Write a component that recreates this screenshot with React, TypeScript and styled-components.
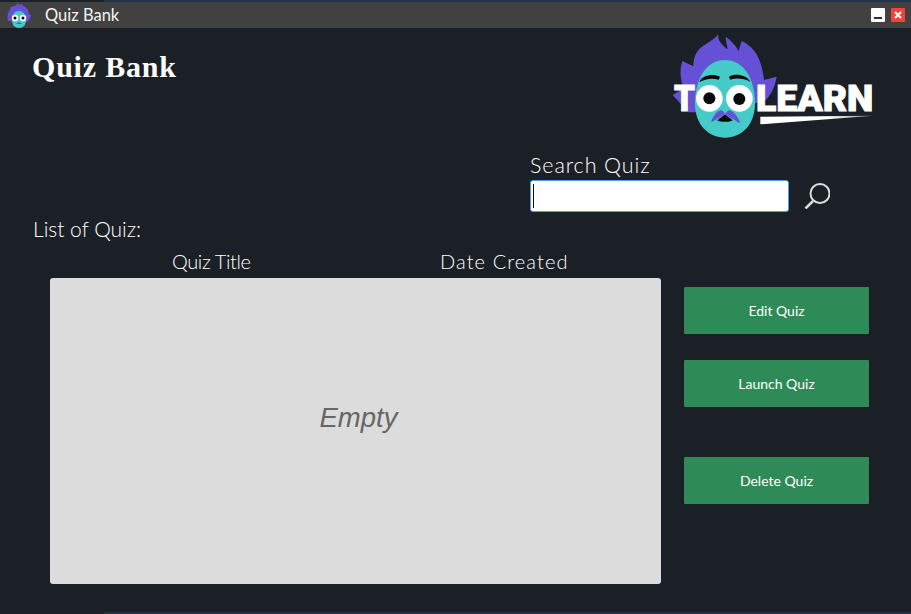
import React from "react";
import styled, { createGlobalStyle } from "styled-components";

const GlobalStyle = createGlobalStyle`
  html, body {
    margin: 0;
    padding: 0;
    background: #1b2027;
  }
`;

const Window = styled.div`
  width: 911px;
  height: 614px;
  display: flex;
  flex-direction: column;
  overflow: hidden;
  background: #1b2027;
  color: #fff;
  font-family: "Lato", "Open Sans", sans-serif;
  font-weight: 400;
`;

const EdgeStrip = styled.div<{ $left: string }>`
  height: 2px;
  flex: none;
  background: linear-gradient(to right, ${(p) => p.$left} 104px, #22354a 104px);
`;

const TitleBar = styled.div`
  height: 26px;
  flex: none;
  display: flex;
  align-items: center;
  padding: 0 6px 0 7px;
  background: #414141;
`;

const TitleText = styled.span`
  margin-left: 14px;
  font-size: 16.5px;
  color: #f4f4f4;
`;

const WindowControls = styled.div`
  margin-left: auto;
  display: flex;
  gap: 6px;
`;

const WindowButton = styled.div<{ $close?: boolean }>`
  width: 14px;
  height: 14px;
  border-radius: 1px;
  display: flex;
  align-items: center;
  justify-content: center;
  background: ${(p) => (p.$close ? "#f04438" : "#fff")};
`;

const Content = styled.div`
  flex: 1;
  display: flex;
  flex-direction: column;
  padding: 0 42px 0 33px;
`;

const TopRow = styled.div`
  height: 124px;
  display: flex;
  justify-content: space-between;
`;

const Heading = styled.h1`
  margin: 22px 0 0 -1px;
  font-family: "Liberation Serif", "Times New Roman", serif;
  font-size: 30px;
  font-weight: 700;
  letter-spacing: 0.8px;
  line-height: 34px;
`;

const LogoSlot = styled.div`
  margin: 4px -8px 0 0;
`;

const SearchBlock = styled.div`
  align-self: flex-end;
  width: 301px;
  margin-right: 38px;
`;

const FieldLabel = styled.div`
  margin-bottom: 2px;
  font-size: 21.500px;
  font-weight: 300;
  letter-spacing: 0.9px;
  line-height: 26px;
`;

const SearchRow = styled.div`
  display: flex;
  align-items: center;
  gap: 15px;
`;

const SearchInput = styled.div`
  width: 259px;
  height: 32px;
  box-sizing: border-box;
  display: flex;
  align-items: center;
  padding-left: 2px;
  background: #fff;
  border: 1px solid #4a9ff5;
  border-radius: 3px;
`;

const Caret = styled.div`
  width: 1px;
  height: 24px;
  background: #111;
`;

const ListLabel = styled.div`
  margin: 2px 0 1px;
  font-size: 21px;
  font-weight: 300;
  line-height: 30px;
`;

const ColumnHeads = styled.div`
  display: flex;
  height: 31px;
  margin-bottom: 2px;
  align-items: center;
  font-size: 20px;
  font-weight: 300;
`;

const ColumnHead = styled.span<{ $width: number; $spacing?: number }>`
  width: ${(p) => p.$width}px;
  flex: none;
  letter-spacing: ${(p) => p.$spacing ?? 0}px;
  white-space: nowrap;
`;

const Body = styled.div`
  display: flex;
  padding-left: 17px;
`;

const ListPanel = styled.div`
  width: 611px;
  height: 306px;
  box-sizing: border-box;
  padding: 0 0 26px 6px;
  display: flex;
  align-items: center;
  justify-content: center;
  background: #dcdcdc;
  border-radius: 3px;
`;

const EmptyText = styled.span`
  font-family: "Liberation Sans", Arial, sans-serif;
  font-style: italic;
  font-size: 27.500px;
  color: #666;
`;

const ActionColumn = styled.div`
  margin-left: 23px;
  padding-top: 9px;
  display: flex;
  flex-direction: column;
`;

const ActionButton = styled.button<{ $gap: number }>`
  width: 185px;
  height: 47px;
  margin-bottom: ${(p) => p.$gap}px;
  border: none;
  border-radius: 1px;
  background: #2e8b57;
  color: #fff;
  font-family: "Lato", "Open Sans", sans-serif;
  font-size: 14px;
  font-weight: 400;
`;

const LogoLetters = styled.text`
  font-family: "Roboto", "Inter", sans-serif;
  font-size: 112px;
  font-weight: 900;
  fill: #fff;
  stroke: #fff;
  stroke-width: 3px;
`;

function Logo() {
  return (
    <svg width="207" height="109" viewBox="30 21 621 327">
      <defs>
        <linearGradient id="swoosh" x1="0" x2="1" y1="0" y2="0">
          <stop offset="0.6" stopColor="#fff" />
          <stop offset="1" stopColor="#8a8a8a" />
        </linearGradient>
      </defs>
      <path
        d="M85 262 L38 210 L72 190 C58 160 60 130 67 108 L100 124 C100 95 110 75 130 62 C150 50 165 40 175 28 C172 45 185 60 203 73 C200 60 198 47 197 35 C212 45 226 60 236 78 C238 68 242 58 245 48 C280 65 305 95 312 165 L350 155 C345 185 335 205 318 225 L200 262 Z"
        fill="#6650d6"
      />
      <path
        d="M195 105 C250 105 285 160 285 235 C285 300 245 338 195 338 C145 338 105 300 105 235 C105 160 140 105 195 105 Z"
        fill="#45cbc8"
      />
      <path d="M118 172 C125 150 160 145 180 155 L176 164 C155 158 135 162 118 172 Z" fill="#0a0a0a" />
      <path d="M207 155 C225 145 258 148 271 170 C252 160 230 157 210 164 Z" fill="#0a0a0a" />
      <path d="M172 286 L195 268 L218 286 C210 292 180 292 172 286 Z" fill="#0a0a0a" />
      <path
        d="M153 292 C158 275 170 258 182 256 C188 256 193 262 195 268 C199 262 204 256 210 256 C222 260 236 278 240 295 C228 288 220 282 212 278 C205 272 199 270 195 270 C190 270 184 274 178 278 C170 282 162 288 153 292 Z"
        fill="#6650d6"
      />
      <LogoLetters x="42" y="258" textLength="63" lengthAdjust="spacingAndGlyphs">
        T
      </LogoLetters>
      <circle cx="148" cy="220" r="40" fill="#fff" />
      <circle cx="238" cy="220" r="40" fill="#fff" />
      <circle cx="148" cy="220" r="18" fill="#0a0a0a" />
      <circle cx="238" cy="222" r="18" fill="#0a0a0a" />
      <LogoLetters x="288" y="258" textLength="352" lengthAdjust="spacingAndGlyphs">
        LEARN
      </LogoLetters>
      <path d="M301 275 L640 272 L301 298 Z" fill="url(#swoosh)" />
    </svg>
  );
}

function AppIcon() {
  return (
    <svg width="24" height="25" viewBox="0 0 24 25">
      <path
        d="M1 18 C0 13 1 9 3 7 C3 4 5 3 8 3 L11 0 L12 2 L15 1 L16 3 C20 4 22 8 22 11 L24 12 C23 15 22 18 20 19 Z"
        fill="#6650d6"
      />
      <path d="M12 8 C17 8 19 13 19 17 C19 22 16 25 12 25 C8 25 5 22 5 17 C5 13 7 8 12 8 Z" fill="#45cbc8" />
      <circle cx="8" cy="15" r="3.200" fill="#fff" />
      <circle cx="16" cy="15" r="3.200" fill="#fff" />
      <circle cx="8" cy="15" r="1.500" fill="#000" />
      <circle cx="16" cy="15" r="1.500" fill="#000" />
      <path d="M9 21 L12 19 L15 21 Z" fill="#6650d6" />
    </svg>
  );
}

export default function App() {
  return (
    <Window>
      <GlobalStyle />
      <EdgeStrip $left="#1e2126" />
      <TitleBar>
        <AppIcon />
        <TitleText>Quiz Bank</TitleText>
        <WindowControls>
          <WindowButton>
            <svg width="10" height="10" viewBox="0 0 10 10">
              <rect x="1" y="7" width="8" height="2" fill="#333" />
            </svg>
          </WindowButton>
          <WindowButton $close>
            <svg width="10" height="10" viewBox="0 0 10 10">
              <path d="M2 2 L8 8 M8 2 L2 8" stroke="#fff" strokeWidth="2" />
            </svg>
          </WindowButton>
        </WindowControls>
      </TitleBar>
      <Content>
        <TopRow>
          <Heading>Quiz Bank</Heading>
          <LogoSlot>
            <Logo />
          </LogoSlot>
        </TopRow>
        <SearchBlock>
          <FieldLabel>Search Quiz</FieldLabel>
          <SearchRow>
            <SearchInput>
              <Caret />
            </SearchInput>
            <svg width="26" height="26" viewBox="0 0 26 26">
              <circle cx="16" cy="10.500" r="9.500" fill="none" stroke="#ddd" strokeWidth="2" />
              <path d="M9 18 L1.500 25.500" stroke="#ddd" strokeWidth="2.500" />
            </svg>
          </SearchRow>
        </SearchBlock>
        <ListLabel>List of Quiz:</ListLabel>
        <ColumnHeads>
          <ColumnHead $width={139} />
          <ColumnHead $width={268} $spacing={-0.4}>
            Quiz Title
          </ColumnHead>
          <ColumnHead $width={140} $spacing={1.1}>
            Date Created
          </ColumnHead>
        </ColumnHeads>
        <Body>
          <ListPanel>
            <EmptyText>Empty</EmptyText>
          </ListPanel>
          <ActionColumn>
            <ActionButton $gap={26}>Edit Quiz</ActionButton>
            <ActionButton $gap={50}>Launch Quiz</ActionButton>
            <ActionButton $gap={0}>Delete Quiz</ActionButton>
          </ActionColumn>
        </Body>
      </Content>
      <EdgeStrip $left="#1b2027" />
    </Window>
  );
}
